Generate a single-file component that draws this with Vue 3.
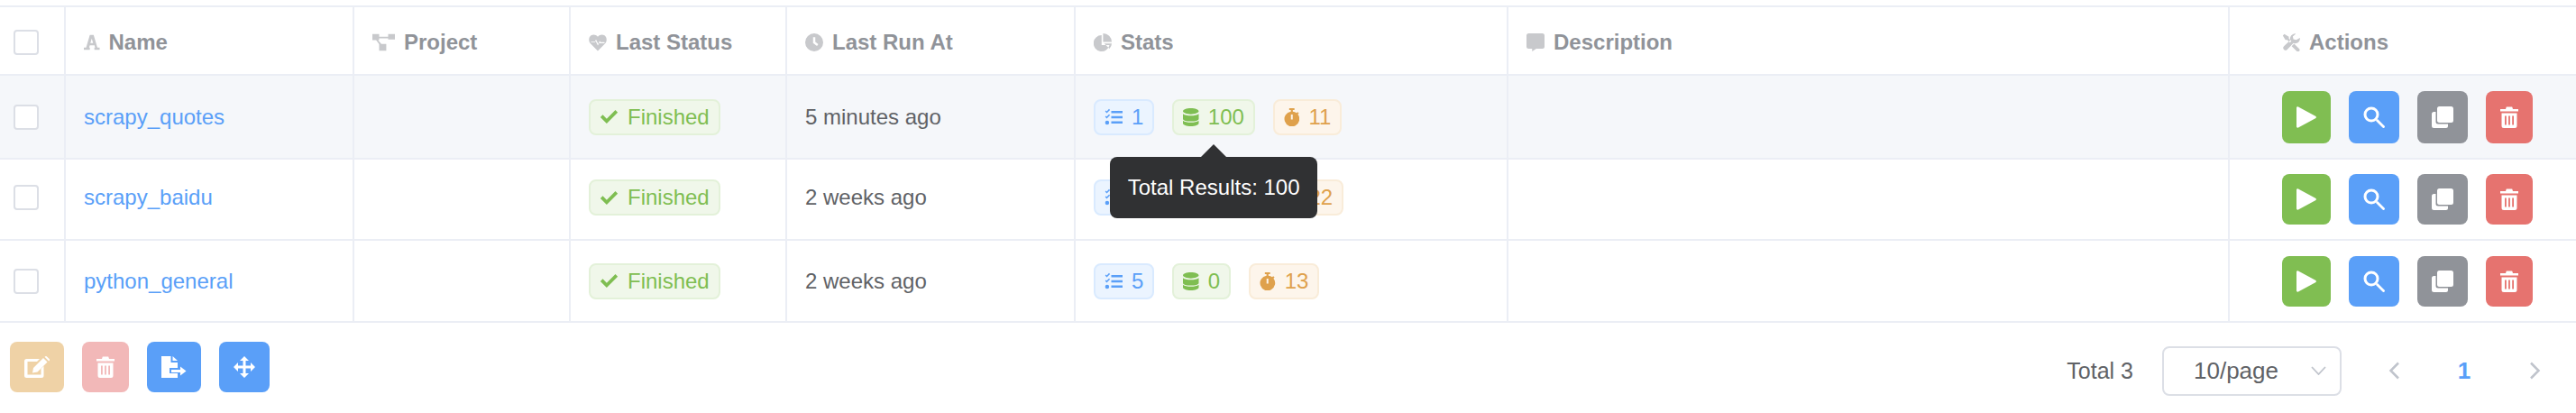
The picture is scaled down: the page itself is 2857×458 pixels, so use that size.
<script setup>
import { h } from 'vue';

// every icon is drawn on a box 24 high, w wide
const icons = {
  font: { w: 21, d: 'M8 2h5l5 17h3v3h-7v-3h1l-.9-3H7.9L7 19h1v3H0v-3h3z M10.5 7L8.7 13h3.6z' },
  project: { w: 30, d: 'M0 1h9v3.500h12V1h9v7h-9V6.500H9V9H7.500l4.500 5h6.500V23H9v-8.500L5 9H0z' },
  heart: { w: 24, d: 'M12 23.500L2.500 13.800C-.6 10.600-.4 5.300 3 2.800 6 .8 9.700 1.600 12 4.500c2.300-2.900 6-3.700 9-1.700 3.400 2.500 3.600 7.800.5 11z M3 10.800h5.200l1.400-2.800 3 6 2-4 1 1.600H21v1.500h-6.400l-.5-.9-2 4-3-6-.8 1.600H3z' },
  clock: { w: 24, d: 'M12 0a12 12 0 1 0 0 24 12 12 0 0 0 0-24z M10.500 5h3v6.300l4 3-1.800 2.400-5.200-3.900z' },
  pie: { w: 24, d: 'M10.500 2.500a10.750 10.750 0 1 0 10.500 13H10.500z M12.500 0A11.500 11.500 0 0 1 24 11.500H12.500z M14 13.500h10a11 11 0 0 1-3 7z' },
  comment: { w: 24, d: 'M3 0h18a3 3 0 0 1 3 3v14.500a3 3 0 0 1-3 3h-8L7.500 24v-3.500H3a3 3 0 0 1-3-3V3a3 3 0 0 1 3-3z' },
  tools: { w: 24, d: 'M1 3L3 1l6 3.500v2.300l3.500 3.500-2 2L7 8.800H4.500z M16 13.800l7 7a2.300 2.300 0 0 1-3.200 3.200l-7-7z M23.800 6a6.500 6.500 0 0 1-8.700 7L6.800 21.500a3 3 0 0 1-4.300-4.300L11 8.900A6.500 6.500 0 0 1 18.300.5l-4 3.700.8 3.700 3.700.8z' },
  check: { w: 24, d: 'M9 20.500L1 12.500l3-3 5 5L20 3.500l3 3z' },
  tasks: { w: 24, d: 'M9 3.500h15v3H9z M9 10.500h15v3H9z M9 17.500h15v3H9z M.8 4.300L2 3.100l1 1L6 1l1.300 1.300L3 6.700z M.8 11.300L2 10.100l1 1L6 8l1.300 1.300L3 13.700z M3.500 16.500a2.700 2.700 0 1 0 0 5.400 2.700 2.700 0 0 0 0-5.400z' },
  database: { w: 21, d: 'M10.500 0C16.300 0 21 1.800 21 4s-4.700 4-10.500 4S0 6.200 0 4s4.700-4 10.500-4z M0 7.500C2 9.200 6 10 10.500 10s8.500-.8 10.500-2.500V14c0 2.200-4.700 3.500-10.500 3.500S0 16.200 0 14z M0 16.500c2 1.700 6 2.500 10.500 2.500S19 18.200 21 16.500V20c0 2.200-4.700 4-10.500 4S0 22.200 0 20z' },
  stopwatch: { w: 21, d: 'M7 0h7v2.400h-2.200v2a9.800 9.800 0 0 1 5 2l1.400-1.400 1.700 1.700-1.400 1.400A10 10 0 1 1 9.200 4.400v-2H7z M9.300 8.500h2.400v6.500H9.300z' },
  play: { w: 22, d: 'M0 1.800C0 .6 1 0 2 .5l19 10.200c1.200.6 1.200 2 0 2.600L2 23.500c-1 .5-2-.1-2-1.300z' },
  search: { w: 24, d: 'M9 .5a8.500 8.500 0 1 0 0 17 8.500 8.500 0 0 0 0-17z M9 3.500a5.500 5.500 0 1 1 0 11 5.500 5.500 0 0 1 0-11z M14 16l2-2 7.500 7.500a1.400 1.400 0 0 1-2 2z' },
  clone: { w: 24, d: 'M8.500 0h13A2.500 2.500 0 0 1 24 2.500v13a2.500 2.500 0 0 1-2.500 2.500h-13A2.500 2.500 0 0 1 6 15.500v-13A2.500 2.500 0 0 1 8.500 0z M4.500 6v11a2.500 2.500 0 0 0 2.500 2.500h11V22a2 2 0 0 1-2 2H2.500A2.500 2.500 0 0 1 0 21.500V8.500A2.500 2.500 0 0 1 2.500 6z' },
  trash: { w: 20, d: 'M0 3h6l.8-2.500h6.400L14 3h6v2.500H0z M1.500 7.500h17V21.500a2.500 2.500 0 0 1-2.500 2.500H4a2.500 2.500 0 0 1-2.500-2.500z M5 10.500h1.800v10H5z M9.100 10.500h1.800v10H9.100z M13.200 10.500H15v10h-1.800z' },
  edit: { w: 28, d: 'M2.500 3H17l-3 3H3.500v14.500h15V14l3-3v10.500a2.500 2.500 0 0 1-2.500 2.500H2.500A2.500 2.500 0 0 1 0 21.500v-16A2.500 2.500 0 0 1 2.500 3z M10 13L21 2l4.500 4.500-11 11-5.500 1z M22.500.7l.5-.3a1.500 1.500 0 0 1 2 0l2.600 2.600a1.500 1.500 0 0 1 0 2l-.4.500z' },
  fileExport: { w: 28, d: 'M0 0h10.500v7H18v6H9v6h9v5H0z M12.500 0L18 5h-5.500z M11 15h10v-3.500l6.500 5-6.500 5V18H11z' },
  arrows: { w: 24, d: 'M12 0l5 5h-3.500v5.500H19V7l5 5-5 5v-3.500h-5.500V19H17l-5 5-5-5h3.500v-5.500H5V17l-5-5 5-5v3.500h5.500V5H7z' },
};

const Icon = ({ name, size = 24 }) =>
  h('svg', {
    viewBox: `0 0 ${icons[name].w} 24`,
    width: (icons[name].w * size) / 24,
    height: size,
    fill: 'currentColor',
    'fill-rule': 'evenodd',
  }, [h('path', { d: icons[name].d })]);

const columns = [
  { label: 'Name', icon: 'font', size: 20 },
  { label: 'Project', icon: 'project', size: 20 },
  { label: 'Last Status', icon: 'heart', size: 20 },
  { label: 'Last Run At', icon: 'clock', size: 20 },
  { label: 'Stats', icon: 'pie', size: 20 },
  { label: 'Description', icon: 'comment', size: 20 },
  { label: 'Actions', icon: 'tools', size: 20 },
];

const rows = [
  { name: 'scrapy_quotes', time: '5 minutes ago', tasks: 1, results: 100, duration: 11 },
  { name: 'scrapy_baidu', time: '2 weeks ago', tasks: 1, results: 100, duration: 22 },
  { name: 'python_general', time: '2 weeks ago', tasks: 5, results: 0, duration: 13 },
];

const rowActions = [
  { icon: 'play', color: 'green' },
  { icon: 'search', color: 'blue' },
  { icon: 'clone', color: 'grey' },
  { icon: 'trash', color: 'red' },
];

const bulkActions = [
  { icon: 'edit', color: 'orange-off' },
  { icon: 'trash', color: 'red-off' },
  { icon: 'fileExport', color: 'blue' },
  { icon: 'arrows', color: 'blue' },
];
</script>

<template>
  <div class="page">
    <div class="table">
      <div class="row head">
        <div class="cell check-cell"><span class="checkbox"></span></div>
        <div
          v-for="col in columns"
          :key="col.label"
          class="cell"
          :class="{ 'actions-cell': col.label === 'Actions' }"
        >
          <Icon class="head-icon" :name="col.icon" :size="col.size" />
          <span>{{ col.label }}</span>
        </div>
      </div>

      <div v-for="(row, index) in rows" :key="row.name" class="row body-row">
        <div class="cell check-cell"><span class="checkbox"></span></div>
        <div class="cell"><a class="link">{{ row.name }}</a></div>
        <div class="cell"></div>
        <div class="cell">
          <span class="tag green">
            <Icon name="check" :size="21" />
            Finished
          </span>
        </div>
        <div class="cell">{{ row.time }}</div>
        <div class="cell stats">
          <span class="tag blue"><Icon name="tasks" :size="20" />{{ row.tasks }}</span>
          <span class="tag green tip-anchor">
            <Icon name="database" :size="20" />{{ row.results }}
            <div v-if="index === 0" class="tooltip">Total Results: {{ row.results }}</div>
          </span>
          <span class="tag orange"><Icon name="stopwatch" :size="20" />{{ row.duration }}</span>
        </div>
        <div class="cell"></div>
        <div class="cell actions-cell buttons">
          <button v-for="a in rowActions" :key="a.color" class="btn" :class="a.color">
            <Icon :name="a.icon" />
          </button>
        </div>
      </div>
    </div>

    <div class="footer">
      <div class="buttons">
        <button v-for="a in bulkActions" :key="a.icon" class="btn" :class="a.color">
          <Icon :name="a.icon" />
        </button>
      </div>
      <div class="pagination">
        <span class="total">Total 3</span>
        <div class="select">
          <span>10/page</span>
          <svg class="select-arrow" width="17" height="10" viewBox="0 0 17 10">
            <path d="M1 1l7.500 8L16 1" />
          </svg>
        </div>
        <div class="pager">
          <button class="page-btn">
            <svg width="13" height="20" viewBox="0 0 13 20"><path d="M11 1.500L2.500 10l8.500 8.500" /></svg>
          </button>
          <button class="page-btn current">1</button>
          <button class="page-btn">
            <svg width="13" height="20" viewBox="0 0 13 20"><path d="M2 1.500L10.500 10 2 18.500" /></svg>
          </button>
        </div>
      </div>
    </div>
  </div>
</template>

<style>
html,
body {
  margin: 0;
  background: #fff;
}
</style>

<style scoped>
.page {
  width: 2857px;
  height: 458px;
  overflow: hidden;
  padding-top: 6px;
  box-sizing: border-box;
  font-family: "Liberation Sans", Arial, sans-serif;
  font-size: 24px;
  color: #606266;
}
.table {
  border-top: 2px solid #ebeef5;
}
.row {
  display: grid;
  grid-template-columns: 73px 320px 240px 240px 320px 480px 800px 384px;
  border-bottom: 2px solid #ebeef5;
  box-sizing: border-box;
}
.head {
  height: 76px;
  color: #909399;
  font-weight: 700;
}
.head .cell {
  padding-top: 3px;
}
.body-row:nth-child(2) {
  height: 93px;
  background: #f5f7fa;
}
.body-row:nth-child(3) {
  height: 90px;
}
.body-row:nth-child(3) .cell:not(.actions-cell) {
  padding-bottom: 4px;
}
.body-row:nth-child(4) {
  height: 91px;
}
.cell {
  display: flex;
  align-items: center;
  gap: 10px;
  padding-left: 20px;
  border-right: 2px solid #ebeef5;
  box-sizing: border-box;
  min-width: 0;
}
.cell:last-child {
  border-right: none;
}
.check-cell {
  padding-left: 15px;
}
.actions-cell {
  padding-left: 58px;
}
.head-icon {
  color: #c8c9cc;
  flex: none;
}
.checkbox {
  width: 28px;
  height: 28px;
  border: 2px solid #dcdfe6;
  border-radius: 4px;
  background: #fff;
  box-sizing: border-box;
}
.link {
  color: #5a9ff8;
}
.stats {
  gap: 20px;
}
.tag {
  display: inline-flex;
  align-items: center;
  gap: 10px;
  height: 40px;
  padding: 0 10px;
  border: 2px solid;
  border-radius: 8px;
  box-sizing: border-box;
  white-space: nowrap;
}
.tag.green {
  color: #7fbe52;
  background: #f0f7ea;
  border-color: #e3f1d9;
}
.tag.blue {
  color: #5a9ff8;
  background: #ebf4ff;
  border-color: #d9eaff;
}
.tag.orange {
  color: #dfa14c;
  background: #fdf5eb;
  border-color: #f9ecd9;
}
.tip-anchor {
  position: relative;
}
.tooltip {
  position: absolute;
  top: 62px;
  left: 50%;
  transform: translateX(-50%);
  width: 230px;
  height: 68px;
  box-sizing: border-box;
  display: flex;
  align-items: center;
  justify-content: center;
  background: #303133;
  color: #fff;
  border-radius: 8px;
  z-index: 2;
}
.tooltip::before {
  content: "";
  position: absolute;
  top: -14px;
  left: 50%;
  margin-left: -14px;
  border-left: 14px solid transparent;
  border-right: 14px solid transparent;
  border-bottom: 14px solid #303133;
}
.buttons {
  display: flex;
  align-items: center;
  gap: 20px;
}
.btn {
  display: inline-flex;
  align-items: center;
  justify-content: center;
  padding: 16px;
  height: 56px;
  border: none;
  border-radius: 8px;
  box-sizing: border-box;
  color: #fff;
}
.body-row:nth-child(2) .btn {
  height: 58px;
}
.btn.green {
  background: #80be52;
}
.btn.blue {
  background: #5a9ff8;
}
.btn.grey {
  background: #909399;
}
.btn.red {
  background: #e6736f;
}
.btn.orange-off {
  background: #efd2a6;
}
.btn.red-off {
  background: #f2b8b8;
}
.footer {
  display: flex;
  justify-content: space-between;
  align-items: flex-start;
  padding: 21px 7px 0 11px;
}
.pagination {
  display: flex;
  align-items: center;
  font-size: 26px;
  margin-top: 4px;
}
.total {
  font-size: 25px;
  margin-right: 32px;
}
.select {
  width: 199px;
  height: 55px;
  display: flex;
  align-items: center;
  justify-content: space-between;
  padding: 0 15px 0 33px;
  border: 2px solid #dcdfe6;
  border-radius: 8px;
  box-sizing: border-box;
  margin-right: 19px;
}
.select-arrow path,
.page-btn path {
  fill: none;
  stroke: #c0c4cc;
  stroke-width: 2.5;
}
.select-arrow path {
  stroke-width: 1.8;
}
.pager {
  display: flex;
}
.page-btn {
  width: 78px;
  height: 56px;
  padding: 0;
  display: flex;
  align-items: center;
  justify-content: center;
  border: none;
  background: none;
  font: inherit;
}
.page-btn.current {
  color: #5a9ff8;
  font-weight: 700;
}
</style>
